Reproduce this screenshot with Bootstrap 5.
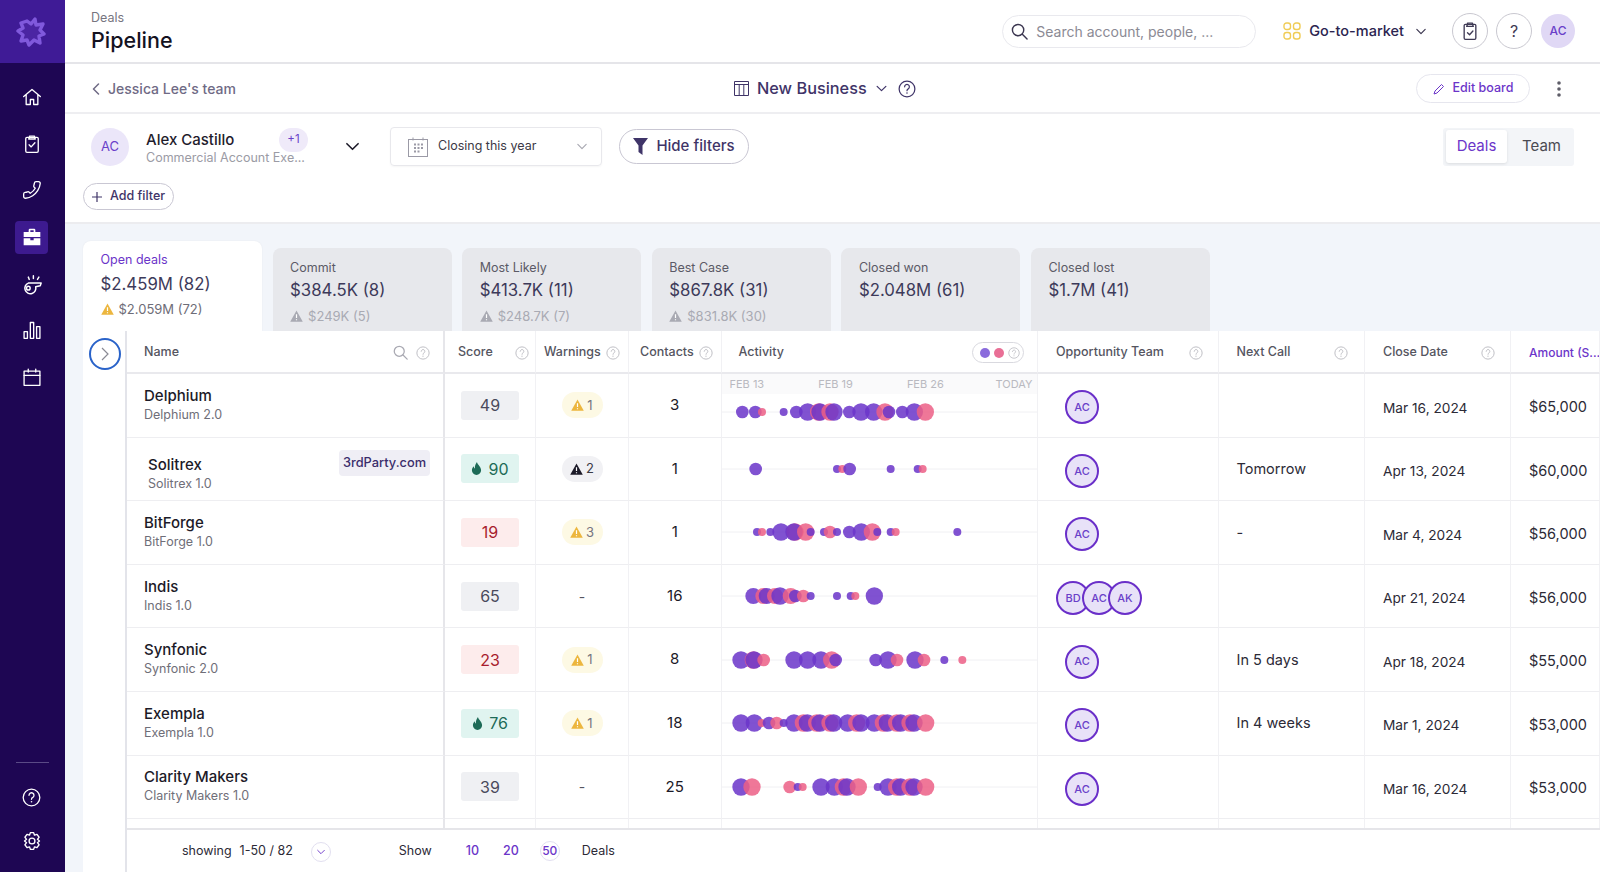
<!DOCTYPE html>
<html lang="en">
<head>
<meta charset="utf-8">
<title>Pipeline</title>
<link href="https://cdn.jsdelivr.net/npm/bootstrap@5.3.0/dist/css/bootstrap.min.css" rel="stylesheet">
<style>
html,body{height:872px;overflow:hidden}
body{font-family:Inter,"Noto Sans",sans-serif;background:#fff;color:#1c1a28;font-size:14px;display:flex}
svg{display:block;flex:none}
.ic{fill:none;stroke:currentColor;stroke-width:1.6;stroke-linecap:round;stroke-linejoin:round}
.side{width:65px;flex:none;background:#1e0653;color:#fff;height:872px}
.logo-box{height:63px;background:#3f1b96;margin-bottom:11px;padding-right:3px}
.side-item{width:33px;height:33px;margin:6.8px auto;border-radius:4px;position:relative;left:-1px}
.side-item.on{background:#3d1a8f}
.side-item.low{margin:5px auto}
.side-item.last{margin-bottom:15px}
.side-rule{width:33px;height:1px;background:#5a4a86;margin:0 auto 13px}
.main-col{flex:1;min-width:0;background:#f2f5fa;height:872px}
.top-head{height:64px;background:#fff;border-bottom:2px solid #e5e5e9;padding:0 25px 0 26px}
.crumb{font-size:12.5px;color:#77757f;line-height:16px;margin-top:10px}
.page-h{font-size:21.500px;font-weight:500;line-height:28px;color:#14121f}
.search-box{width:254px;height:33px;border:1px solid #e9e9ee;border-radius:17px;padding-left:8px;color:#8b8a94;font-size:14px;margin-right:27px;margin-left:1px}
.gtm{font-size:14.5px;font-weight:500;color:#2b2450}
.gtm-chev{margin:0 26px 0 12px}
.round-btn{width:36px;height:36px;border:1px solid #c9c8d0;border-radius:50%;color:#3f3a55;font-size:16px;margin-right:8px;background:#fff}
.me{width:34px;height:34px;border-radius:50%;background:#e0d8f5;color:#6a3fc9;font-size:12px;font-weight:500;margin-left:1px}
.sub-head{height:50px;background:#fff;border-bottom:2px solid #eeeef1;padding:1px 39px 0 27px}
.back-link{font-size:14px;font-weight:500;color:#6f6a85;width:642px}
.board{font-size:16.300px;font-weight:500;color:#3f3468}
.edit-btn{height:29px;width:114px;border:1px solid #e6e6ee;border-radius:15px;color:#6b35c9;font-size:12.5px;font-weight:500;margin-right:27px;background:#fff}
.filter-area{height:110px;background:#fff;border-bottom:2px solid #ececef;padding:13px 26px 0 18px}
.filter-row{height:39px}
.av-lg{width:38px;height:38px;border-radius:50%;background:#ebe6f9;color:#6a3fc9;font-size:13px;margin-left:8px}
.who{width:162px;margin-left:17px;padding-top:1px;align-self:flex-start}
.who b{font-weight:500;font-size:15px;line-height:20px;color:#1f1c2c}
.who small{font-size:12.5px;color:#9b9ba5;line-height:16px;white-space:nowrap;margin-top:-2px}
.plus-chip{width:29px;height:24px;border-radius:12px;background:#efeaf9;color:#6a3fc9;font-size:11.5px}
.who-chev{margin-left:37px}
.date-sel{width:212px;height:39px;border:1px solid #e8e8ec;border-radius:4px;margin-left:30px;padding:0 14px 0 17px;font-size:12.5px;color:#3c3a46;box-shadow:0 1px 2px #0000000a}
.hide-btn{width:130px;height:35px;border:1px solid #c9c7d3;border-radius:18px;margin-left:17px;color:#3f3468;font-size:15px;font-weight:500;background:#fff}
.seg{width:131px;height:38px;background:#f3f5f8;border-radius:3px;padding:3px;font-size:15px}
.seg-on{width:61px;height:33px;background:#fff;border-radius:3px;color:#6b35c9;box-shadow:0 1px 3px #0000001a}
.seg-off{flex:1;color:#4a4a52;padding-left:5px}
.add-btn{width:91px;height:27px;border:1px solid #c9c7d3;border-radius:14px;color:#3f3468;font-size:12.5px;font-weight:500;margin-top:17px;background:#fff}
.tabs-row{height:107px;padding:17px 0 0 18px;gap:10.6px;align-items:flex-end}
.tab-on,.tab-off{width:179px;border-radius:8px 8px 0 0}
.tab-on{height:90px;background:#fff;padding:10px 17.5px;box-shadow:0 0 2px #0000000f}
.tab-off{height:83px;background:#e7e8ec;padding:11px 17.5px}
.tab-k{font-size:12.5px;line-height:18px;color:#5b5a66}
.tab-on .tab-k{color:#6b35c9}
.tab-v{font-size:16.800px;line-height:26px;color:#3d3a5a}
.tab-on .tab-v{margin-top:2px}
.tab-w{font-size:13px;line-height:18px;color:#a9aab3;margin-top:4px;gap:5px}
.tab-on .tab-w{color:#6e6d78;margin-top:3px}
.board-wrap{height:541px;margin-left:18px;background:#fff}
.rail{width:44px;flex:none;border-right:2px solid #e3e4ea;padding:7px 0 0 6px}
.rail-btn{width:32px;height:32px;border:2px solid #2a63c9;border-radius:50%;color:#8a8a94;background:#fff}
.grid-col{flex:1;min-width:0;overflow:hidden}
.grid-scroll{height:497px;overflow:hidden}
.deals{table-layout:fixed;width:1473px;margin:0;border-collapse:separate;border-spacing:0}
.deals th,.deals td{padding:0;border:0;border-right:1px solid #f1f1f4;border-bottom:1px solid #eeeef1;vertical-align:middle;background:#fff;box-shadow:none}
.deals th{height:43px;font-size:12.5px;font-weight:500;color:#55555f;border-bottom:2px solid #e9e9ed}
.deals tbody tr{height:63.6px}
.deals .c-name{border-right:2px solid #e6e6ea}
.th-in{display:flex;align-items:center;justify-content:space-between;white-space:nowrap;overflow:hidden;margin-top:2px}
.th-am{font-size:12px;color:#6b35c9;padding-left:18px}
.q{color:#bdbdc4;width:14px;height:14px}
.n1{font-size:15px;font-weight:500;line-height:20px;color:#1c1a28;margin-top:-1px}
.n2{font-size:12.5px;line-height:18px;color:#6f6e78}
.name-in{padding:0 13px 0 17px;display:flex;justify-content:space-between;align-items:center}
.name-shift{margin-top:11px;margin-left:4px}
.tp{width:91px;height:26px;margin-bottom:12px;border-radius:4px;background:#efeef5;color:#3a2d6b;font-size:12.800px;font-weight:500}
.score{width:58px;height:29px;margin:0 auto;border-radius:3px;font-size:16px;gap:6px}
.s-g{background:#eff0f3;color:#4a4a5c}
.s-h{background:#e0f4f0;color:#1d6b57}
.s-r{background:#fdecec;color:#a81c2e}
.warn{width:41px;height:26px;margin:0 auto;border-radius:13px;background:#fdf9e4;color:#77757f;font-size:13px;gap:3px}
.warn.dk{background:#f1f1f4;color:#3a3a44}
.dash{color:#55555f;text-align:center;font-size:14px}
.ctc{font-size:15px;text-align:center;color:#1c1a28}
.act{position:relative}
.deals td.act-top{padding-top:14px}
.strip{position:absolute;left:0;right:0;top:0;height:20px;background:#fafafb;display:flex;font-size:11px;color:#b9b9c0;padding-left:8px;align-items:center}
.strip span{width:88.7px;flex:none}
.team-in{display:flex;padding:4px 0 0 27px}
.team-in.multi{padding-left:18px}
.pv{width:34px;height:34px;border:2px solid #6a2fc9;border-radius:50%;background:#e8e2f8;color:#6a3fc9;font-size:11px;font-weight:500}
.pv+.pv{margin-left:-8px}
.deals td.nx{padding-left:18px;font-size:14.5px;color:#2c2a36}
.deals td.dt{padding:5px 0 0 18px;font-size:13.7px;color:#2c2a36;white-space:nowrap}
.deals td.am{padding:3px 0 0 18px;font-size:14.5px;color:#2c2a36;white-space:nowrap}
.p{fill:#6b35c9;fill-opacity:.86}
.k{fill:#ec5f86;fill-opacity:.85}
.ln{stroke:#f0f0f3;stroke-width:3}
.lg{width:52px;height:21px;border:1px solid #d9d9df;border-radius:11px;gap:4px;padding-left:7px}
.dotp,.dotk{width:10px;height:10px;border-radius:50%}
.dotp{background:#8a6bdc}.dotk{background:#e96f96}
.pager{height:44px;border-top:2px solid #e5e5e9;font-size:12.5px;color:#2c2a36;padding-left:55px;background:#fff}
.pg-c{width:20px;height:20px;border:1px solid #e2dff0;border-radius:50%;color:#6b35c9;margin:2px 0 0 18px}
.pg-n{color:#6b35c9;font-weight:500}
.pg-on{width:20px;height:20px;border:1px solid #e2dff0;border-radius:50%;font-size:12px}
</style>
</head>
<body>
<svg width="0" height="0" style="position:absolute">
<symbol id="help" viewBox="0 0 16 16"><circle cx="8" cy="8" r="7" fill="none" stroke="currentColor" stroke-width="1.1"/><path d="M5.9 6.1a2.1 2.1 0 1 1 3.2 1.8c-.7.4-1.1.8-1.1 1.6" fill="none" stroke="currentColor" stroke-width="1.1" stroke-linecap="round"/><circle cx="8" cy="11.6" r=".7" fill="currentColor"/></symbol>
<symbol id="tri" viewBox="0 0 14 13"><path d="M7 .5 13.8 12.6H.2Z" fill="currentColor"/><path d="M7 4.6v4M7 10v1" stroke="#fff" stroke-width="1.3"/></symbol>
<symbol id="fire" viewBox="0 0 12 14"><path d="M6.5 0C7 3 11 5 11 9a5 5 0 0 1-10 0c0-2 1-3.4 2-4.4 0 1.4.5 2.2 1.2 2.4C4 4.500 5 2 6.500 0Z" fill="currentColor"/></symbol>
<symbol id="chev" viewBox="0 0 12 8"><path d="M1 1.500 6 6.500 11 1.500" fill="none" stroke="currentColor" stroke-width="1.4" stroke-linecap="round" stroke-linejoin="round"/></symbol>
<symbol id="mag" viewBox="0 0 18 18"><circle cx="7.500" cy="7.500" r="6" fill="none" stroke="currentColor" stroke-width="1.500"/><path d="m12 12 5 5" stroke="currentColor" stroke-width="1.500" stroke-linecap="round"/></symbol>
</svg>

<nav class="side d-flex flex-column">
  <div class="logo-box d-flex align-items-center justify-content-center">
    <svg width="30" height="30" viewBox="0 0 30 30"><path d="M11 4 15 7 19 2 20 8 27 7 24 13 28 17 23 19 24 26 18 23 13 28 11 23 5 24 7 18 2 14 7 11 5 6Z" fill="#4b25a3" stroke="#8059dc" stroke-width="3.400" stroke-linejoin="round"/></svg>
  </div>
  <div class="side-item d-flex align-items-center justify-content-center"><svg class="ic" width="20" height="20" viewBox="0 0 24 24"><path d="M2 11.500 12 3l10 8.500M5 9v12h5v-6h4v6h5V9"/></svg></div>
  <div class="side-item d-flex align-items-center justify-content-center"><svg class="ic" width="20" height="20" viewBox="0 0 24 24"><rect x="4.500" y="4" width="15" height="18" rx="1.500"/><path d="M9 4V2.500h6V4l1 2H8ZM8.500 13l2.500 2.500 4.500-5"/></svg></div>
  <div class="side-item d-flex align-items-center justify-content-center"><svg class="ic" width="20" height="20" viewBox="0 0 24 24"><path transform="matrix(-1 0 0 1 24 0)" d="M22 16.920v3a2 2 0 0 1-2.180 2 19.790 19.790 0 0 1-8.630-3.070 19.500 19.500 0 0 1-6-6 19.790 19.790 0 0 1-3.070-8.670A2 2 0 0 1 4.110 2h3a2 2 0 0 1 2 1.720 12.840 12.840 0 0 0 .7 2.810 2 2 0 0 1-.45 2.110L8.090 9.910a16 16 0 0 0 6 6l1.270-1.270a2 2 0 0 1 2.110-.45 12.840 12.840 0 0 0 2.810.7A2 2 0 0 1 22 16.920z"/></svg></div>
  <div class="side-item on d-flex align-items-center justify-content-center"><svg width="20" height="20" viewBox="0 0 24 24" fill="#fff"><path d="M8 6V3.500A1.500 1.500 0 0 1 9.500 2h5A1.500 1.500 0 0 1 16 3.500V6h6v6H2V6Zm2-2v2h4V4ZM2 13.500h8V16h4v-2.500h8V22H2Z"/></svg></div>
  <div class="side-item d-flex align-items-center justify-content-center"><svg class="ic" width="22" height="22" viewBox="0 0 24 24"><path d="M8 11h14l-1 3-5 1a6 6 0 1 1-8-4Z"/><circle cx="8" cy="16.500" r="2"/><path d="M9 7 8 4.500M13.500 6V3M18 7l1.500-2.500"/></svg></div>
  <div class="side-item d-flex align-items-center justify-content-center"><svg class="ic" width="20" height="20" viewBox="0 0 24 24"><rect x="2.500" y="14" width="4" height="8"/><rect x="10" y="3" width="4" height="19"/><rect x="17.500" y="8" width="4" height="14"/></svg></div>
  <div class="side-item d-flex align-items-center justify-content-center"><svg class="ic" width="20" height="20" viewBox="0 0 24 24"><rect x="2.500" y="5" width="19" height="17"/><path d="M2.500 10h19M7.500 2.500V6M16.500 2.500V6"/></svg></div>
  <div class="mt-auto"></div>
  <div class="side-rule"></div>
  <div class="side-item low d-flex align-items-center justify-content-center"><svg width="19" height="19" viewBox="0 0 16 16" color="#fff"><use href="#help"/></svg></div>
  <div class="side-item low last d-flex align-items-center justify-content-center"><svg class="ic" width="20" height="20" viewBox="0 0 24 24"><path d="M10 2h4l1 3 3-1 2.500 3.500L18.500 10l2.500 2-2.500 2 2 2.500L18 20l-3-1-1 3h-4l-1-3-3 1-2.500-3.500L5.500 14 3 12l2.500-2-2-2.500L6 4l3 1Z"/><circle cx="12" cy="12" r="3.500"/></svg></div>
</nav>

<div class="main-col d-flex flex-column">
  <header class="top-head d-flex align-items-start">
    <div class="flex-grow-1">
      <div class="crumb">Deals</div>
      <div class="page-h">Pipeline</div>
    </div>
    <div class="d-flex align-items-center" style="height:62px">
      <div class="search-box d-flex align-items-center gap-2"><svg width="17" height="17" color="#3b3650"><use href="#mag"/></svg><span>Search account, people, ...</span></div>
      <svg width="18" height="18" viewBox="0 0 18 18" fill="none" stroke="#f0cc55" stroke-width="1.400"><rect x="1" y="1" width="6.500" height="6.500" rx="2.500"/><rect x="10.500" y="1" width="6.500" height="6.500" rx="2.500"/><rect x="1" y="10.500" width="6.500" height="6.500" rx="2.500"/><rect x="10.500" y="10.500" width="6.500" height="6.500" rx="2.500"/></svg>
      <span class="gtm ms-2">Go-to-market</span>
      <svg class="gtm-chev" width="10" height="7" color="#3b3650"><use href="#chev"/></svg>
      <div class="round-btn d-flex align-items-center justify-content-center"><svg class="ic" width="20" height="20" viewBox="0 0 24 24" stroke-width="1.300"><rect x="5" y="4" width="14" height="18" rx="1.500"/><path d="M9 4V2.500h6V4l1 2.500H8ZM9 14l2.500 2.500L15.500 12"/></svg></div>
      <div class="round-btn d-flex align-items-center justify-content-center">?</div>
      <div class="me d-flex align-items-center justify-content-center">AC</div>
    </div>
  </header>

  <div class="sub-head d-flex align-items-center">
    <div class="back-link d-flex align-items-center gap-2"><svg width="8" height="12" viewBox="0 0 8 12" fill="none" stroke="#6f6a85" stroke-width="1.500" stroke-linecap="round" stroke-linejoin="round"><path d="M6.500 1 1.500 6l5 5"/></svg><span>Jessica Lee's team</span></div>
    <div class="board d-flex align-items-center flex-grow-1">
      <svg width="15" height="15" viewBox="0 0 15 15" fill="none" stroke="#3f3468"><path d="M.5.500h14v14H.5ZM.5 3.500h14M5.200 3.500v11M9.800 3.500v11"/></svg>
      <span style="margin-left:8px">New Business</span>
      <svg width="11" height="7" style="margin-left:9px" color="#3f3468"><use href="#chev"/></svg>
      <svg width="18" height="18" style="margin-left:11px" color="#3f3468"><use href="#help"/></svg>
    </div>
    <div class="edit-btn d-flex align-items-center justify-content-center gap-2"><svg width="12" height="12" viewBox="0 0 12 12" fill="none" stroke="#6b35c9"><path d="M8.500 1.500 10.500 3.500 4 10l-3 1 1-3Z"/></svg>Edit board</div>
    <svg width="4" height="16" viewBox="0 0 4 16" fill="#5e5d68"><circle cx="2" cy="2" r="1.800"/><circle cx="2" cy="8" r="1.800"/><circle cx="2" cy="14" r="1.800"/></svg>
  </div>

  <div class="filter-area">
    <div class="filter-row d-flex align-items-center">
      <div class="av-lg d-flex align-items-center justify-content-center">AC</div>
      <div class="who d-flex flex-column">
        <div class="d-flex justify-content-between align-items-center"><b>Alex Castillo</b><span class="plus-chip d-flex align-items-center justify-content-center">+1</span></div>
        <small>Commercial Account Exe...</small>
      </div>
      <svg class="who-chev" width="15" height="9" color="#1c1a28"><use href="#chev"/></svg>
      <div class="date-sel d-flex align-items-center">
        <svg width="20" height="20" viewBox="0 0 20 20" fill="none" stroke="#9b9aa6"><rect x=".5" y="2.500" width="19" height="17"/><path d="M5 .5v3M15 .5v3"/><path d="M6 7.500h2M9.500 7.500h2M13 7.500h2M6 11h2M9.500 11h2M13 11h2M6 14.500h2M9.500 14.500h2" stroke-width="2"/></svg>
        <span style="margin-left:10px" class="flex-grow-1">Closing this year</span>
        <svg width="10" height="7" color="#a9a9b2"><use href="#chev"/></svg>
      </div>
      <div class="hide-btn d-flex align-items-center justify-content-center gap-2"><svg width="15" height="17" viewBox="0 0 15 17" fill="#3f3468"><path d="M0 0h15L9.500 7.500V17L5.500 14V7.500Z"/></svg>Hide filters</div>
      <div class="ms-auto seg d-flex align-items-center"><span class="seg-on d-flex align-items-center justify-content-center">Deals</span><span class="seg-off text-center">Team</span></div>
    </div>
    <div class="add-btn d-flex align-items-center justify-content-center gap-2"><svg width="10" height="10" viewBox="0 0 10 10" stroke="#3f3468" stroke-width="1.200"><path d="M5 0v10M0 5h10"/></svg>Add filter</div>
  </div>

  <div class="tabs-row d-flex">
    <div class="tab-on"><div class="tab-k">Open deals</div><div class="tab-v">$2.459M (82)</div><div class="tab-w d-flex align-items-center"><svg width="13" height="12" color="#ecb63e"><use href="#tri"/></svg>$2.059M (72)</div></div>
    <div class="tab-off"><div class="tab-k">Commit</div><div class="tab-v">$384.5K (8)</div><div class="tab-w d-flex align-items-center"><svg width="13" height="12" color="#a9aab3"><use href="#tri"/></svg>$249K (5)</div></div>
    <div class="tab-off"><div class="tab-k">Most Likely</div><div class="tab-v">$413.7K (11)</div><div class="tab-w d-flex align-items-center"><svg width="13" height="12" color="#a9aab3"><use href="#tri"/></svg>$248.7K (7)</div></div>
    <div class="tab-off"><div class="tab-k">Best Case</div><div class="tab-v">$867.8K (31)</div><div class="tab-w d-flex align-items-center"><svg width="13" height="12" color="#a9aab3"><use href="#tri"/></svg>$831.8K (30)</div></div>
    <div class="tab-off"><div class="tab-k">Closed won</div><div class="tab-v">$2.048M (61)</div></div>
    <div class="tab-off"><div class="tab-k">Closed lost</div><div class="tab-v">$1.7M (41)</div></div>
  </div>

  <div class="board-wrap d-flex">
    <div class="rail"><div class="rail-btn d-flex align-items-center justify-content-center"><svg width="8" height="14" viewBox="0 0 8 14" fill="none" stroke="currentColor" stroke-width="1.200"><path d="M1 1l6 6-6 6"/></svg></div></div>
    <div class="grid-col d-flex flex-column">
      <div class="grid-scroll">
      <table class="table deals">
        <colgroup><col style="width:318px"><col style="width:91px"><col style="width:93px"><col style="width:92.500px"><col style="width:316.500px"><col style="width:180.500px"><col style="width:146.500px"><col style="width:146px"><col style="width:89px"></colgroup>
        <thead><tr>
          <th class="c-name"><div class="th-in" style="padding:0 13px 0 17px"><span class="flex-grow-1">Name</span><svg class="me-2" width="15" height="15" color="#a9a9b2"><use href="#mag"/></svg><svg class="q"><use href="#help"/></svg></div></th>
          <th><div class="th-in" style="padding:0 6px 0 13px">Score<svg class="q"><use href="#help"/></svg></div></th>
          <th><div class="th-in" style="padding:0 8px 0 8px">Warnings<svg class="q"><use href="#help"/></svg></div></th>
          <th><div class="th-in" style="padding:0 8px 0 11px">Contacts<svg class="q"><use href="#help"/></svg></div></th>
          <th><div class="th-in" style="padding:0 13px 0 17px">Activity<span class="lg d-flex align-items-center"><i class="dotp"></i><i class="dotk"></i><svg class="q" style="width:12px;height:12px"><use href="#help"/></svg></span></div></th>
          <th><div class="th-in" style="padding:0 15px 0 18px">Opportunity Team<svg class="q"><use href="#help"/></svg></div></th>
          <th><div class="th-in" style="padding:0 16px 0 18px">Next Call<svg class="q"><use href="#help"/></svg></div></th>
          <th><div class="th-in" style="padding:0 15px 0 18px">Close Date<svg class="q"><use href="#help"/></svg></div></th>
          <th><div class="th-in th-am">Amount (S...</div></th>
        </tr></thead>
        <tbody>
        <tr>
          <td class="c-name"><div class="name-in"><div><div class="n1">Delphium</div><div class="n2">Delphium 2.0</div></div></div></td>
          <td><div class="score s-g d-flex align-items-center justify-content-center">49</div></td>
          <td><div class="warn d-flex align-items-center justify-content-center"><svg width="13" height="12" color="#ecb63e"><use href="#tri"/></svg>1</div></td>
          <td class="ctc">3</td>
          <td class="act act-top"><div class="strip"><span>FEB 13</span><span>FEB 19</span><span>FEB 26</span><span>TODAY</span></div>
            <svg width="317" height="44" viewBox="6 -66 951 132"><path class="ln" d="M6 0H951"/><circle class="p" cx="67" r="19"/><circle class="p" cx="106" r="19"/><circle class="k" cx="126" r="12"/><circle class="p" cx="191" r="12"/><circle class="p" cx="229" r="19"/><circle class="p" cx="263" r="26"/><circle class="k" cx="296" r="26"/><circle class="p" cx="300" r="26"/><circle class="k" cx="330" r="26"/><circle class="p" cx="342" r="26"/><circle class="p" cx="388" r="19"/><circle class="p" cx="423" r="26"/><circle class="p" cx="461" r="26"/><circle class="k" cx="495" r="26"/><circle class="p" cx="507" r="19"/><circle class="p" cx="547" r="19"/><circle class="p" cx="583" r="26"/><circle class="k" cx="616" r="26"/></svg></td>
          <td><div class="team-in"><div class="pv d-flex align-items-center justify-content-center">AC</div></div></td>
          <td class="nx"></td>
          <td class="dt">Mar 16, 2024</td>
          <td class="am">$65,000</td>
        </tr>
        <tr>
          <td class="c-name"><div class="name-in"><div class="name-shift"><div class="n1">Solitrex</div><div class="n2">Solitrex 1.0</div></div><div class="tp d-flex align-items-center justify-content-center">3rdParty.com</div></div></td>
          <td><div class="score s-h d-flex align-items-center justify-content-center"><svg width="11" height="13" color="#1d6b57"><use href="#fire"/></svg>90</div></td>
          <td><div class="warn dk d-flex align-items-center justify-content-center"><svg width="13" height="12" color="#1c1a28"><use href="#tri"/></svg>2</div></td>
          <td class="ctc">1</td>
          <td class="act"><svg width="317" height="44" viewBox="6 -66 951 132"><path class="ln" d="M6 0H951"/><circle class="p" cx="107" r="19"/><circle class="p" cx="351" r="12"/><circle class="k" cx="367" r="12"/><circle class="p" cx="389" r="19"/><circle class="p" cx="512" r="12"/><circle class="p" cx="593" r="12"/><circle class="k" cx="608" r="12"/></svg></td>
          <td><div class="team-in"><div class="pv d-flex align-items-center justify-content-center">AC</div></div></td>
          <td class="nx">Tomorrow</td>
          <td class="dt">Apr 13, 2024</td>
          <td class="am">$60,000</td>
        </tr>
        <tr>
          <td class="c-name"><div class="name-in"><div><div class="n1">BitForge</div><div class="n2">BitForge 1.0</div></div></div></td>
          <td><div class="score s-r d-flex align-items-center justify-content-center">19</div></td>
          <td><div class="warn d-flex align-items-center justify-content-center"><svg width="13" height="12" color="#ecb63e"><use href="#tri"/></svg>3</div></td>
          <td class="ctc">1</td>
          <td class="act"><svg width="317" height="44" viewBox="6 -66 951 132"><path class="ln" d="M6 0H951"/><circle class="p" cx="111" r="12"/><circle class="k" cx="126" r="12"/><circle class="p" cx="151" r="12"/><circle class="p" cx="183" r="26"/><circle class="k" cx="225" r="26"/><circle class="p" cx="222" r="26"/><circle class="k" cx="257" r="26"/><circle class="p" cx="272" r="12"/><circle class="p" cx="312" r="12"/><circle class="k" cx="330" r="19"/><circle class="p" cx="351" r="12"/><circle class="p" cx="388" r="19"/><circle class="p" cx="424" r="26"/><circle class="k" cx="457" r="26"/><circle class="p" cx="472" r="12"/><circle class="p" cx="512" r="12"/><circle class="k" cx="527" r="12"/><circle class="p" cx="712" r="12"/></svg></td>
          <td><div class="team-in"><div class="pv d-flex align-items-center justify-content-center">AC</div></div></td>
          <td class="nx">-</td>
          <td class="dt">Mar 4, 2024</td>
          <td class="am">$56,000</td>
        </tr>
        <tr>
          <td class="c-name"><div class="name-in"><div><div class="n1">Indis</div><div class="n2">Indis 1.0</div></div></div></td>
          <td><div class="score s-g d-flex align-items-center justify-content-center">65</div></td>
          <td class="dash">-</td>
          <td class="ctc">16</td>
          <td class="act"><svg width="317" height="44" viewBox="6 -66 951 132"><path class="ln" d="M6 0H951"/><circle class="p" cx="100" r="24"/><circle class="k" cx="130" r="24"/><circle class="p" cx="140" r="24"/><circle class="k" cx="165" r="24"/><circle class="p" cx="180" r="26"/><circle class="k" cx="212" r="24"/><circle class="p" cx="226" r="19"/><circle class="k" cx="250" r="19"/><circle class="p" cx="272" r="12"/><circle class="p" cx="351" r="12"/><circle class="p" cx="392" r="12"/><circle class="k" cx="406" r="12"/><circle class="p" cx="463" r="26"/></svg></td>
          <td><div class="team-in multi"><div class="pv d-flex align-items-center justify-content-center">BD</div><div class="pv d-flex align-items-center justify-content-center">AC</div><div class="pv d-flex align-items-center justify-content-center">AK</div></div></td>
          <td class="nx"></td>
          <td class="dt">Apr 21, 2024</td>
          <td class="am">$56,000</td>
        </tr>
        <tr>
          <td class="c-name"><div class="name-in"><div><div class="n1">Synfonic</div><div class="n2">Synfonic 2.0</div></div></div></td>
          <td><div class="score s-r d-flex align-items-center justify-content-center">23</div></td>
          <td><div class="warn d-flex align-items-center justify-content-center"><svg width="13" height="12" color="#ecb63e"><use href="#tri"/></svg>1</div></td>
          <td class="ctc">8</td>
          <td class="act"><svg width="317" height="44" viewBox="6 -66 951 132"><path class="ln" d="M6 0H951"/><circle class="p" cx="63" r="26"/><circle class="k" cx="100" r="26"/><circle class="p" cx="102" r="26"/><circle class="k" cx="131" r="19"/><circle class="p" cx="222" r="26"/><circle class="p" cx="263" r="26"/><circle class="p" cx="303" r="26"/><circle class="k" cx="335" r="26"/><circle class="p" cx="347" r="19"/><circle class="p" cx="467" r="19"/><circle class="p" cx="504" r="26"/><circle class="k" cx="531" r="19"/><circle class="p" cx="585" r="26"/><circle class="k" cx="612" r="19"/><circle class="p" cx="673" r="12"/><circle class="k" cx="727" r="12"/></svg></td>
          <td><div class="team-in"><div class="pv d-flex align-items-center justify-content-center">AC</div></div></td>
          <td class="nx">In 5 days</td>
          <td class="dt">Apr 18, 2024</td>
          <td class="am">$55,000</td>
        </tr>
        <tr>
          <td class="c-name"><div class="name-in"><div><div class="n1">Exempla</div><div class="n2">Exempla 1.0</div></div></div></td>
          <td><div class="score s-h d-flex align-items-center justify-content-center"><svg width="11" height="13" color="#1d6b57"><use href="#fire"/></svg>76</div></td>
          <td><div class="warn d-flex align-items-center justify-content-center"><svg width="13" height="12" color="#ecb63e"><use href="#tri"/></svg>1</div></td>
          <td class="ctc">18</td>
          <td class="act"><svg width="317" height="44" viewBox="6 -66 951 132"><path class="ln" d="M6 0H951"/><circle class="p" cx="63" r="26"/><circle class="p" cx="103" r="26"/><circle class="k" cx="125" r="12"/><circle class="p" cx="147" r="19"/><circle class="k" cx="170" r="19"/><circle class="p" cx="191" r="12"/><circle class="p" cx="222" r="26"/><circle class="k" cx="250" r="26"/><circle class="p" cx="262" r="26"/><circle class="k" cx="290" r="26"/><circle class="p" cx="300" r="26"/><circle class="k" cx="330" r="26"/><circle class="p" cx="341" r="26"/><circle class="p" cx="383" r="26"/><circle class="k" cx="410" r="26"/><circle class="p" cx="423" r="26"/><circle class="p" cx="463" r="26"/><circle class="k" cx="490" r="26"/><circle class="p" cx="502" r="26"/><circle class="k" cx="530" r="26"/><circle class="p" cx="542" r="26"/><circle class="k" cx="570" r="26"/><circle class="p" cx="582" r="26"/><circle class="k" cx="617" r="26"/></svg></td>
          <td><div class="team-in"><div class="pv d-flex align-items-center justify-content-center">AC</div></div></td>
          <td class="nx">In 4 weeks</td>
          <td class="dt">Mar 1, 2024</td>
          <td class="am">$53,000</td>
        </tr>
        <tr>
          <td class="c-name"><div class="name-in"><div><div class="n1">Clarity Makers</div><div class="n2">Clarity Makers 1.0</div></div></div></td>
          <td><div class="score s-g d-flex align-items-center justify-content-center">39</div></td>
          <td class="dash">-</td>
          <td class="ctc">25</td>
          <td class="act"><svg width="317" height="44" viewBox="6 -66 951 132"><path class="ln" d="M6 0H951"/><circle class="p" cx="63" r="26"/><circle class="k" cx="96" r="26"/><circle class="k" cx="209" r="19"/><circle class="p" cx="233" r="12"/><circle class="k" cx="248" r="12"/><circle class="p" cx="303" r="26"/><circle class="p" cx="343" r="26"/><circle class="k" cx="370" r="26"/><circle class="p" cx="381" r="26"/><circle class="k" cx="415" r="26"/><circle class="p" cx="473" r="12"/><circle class="p" cx="504" r="26"/><circle class="k" cx="530" r="26"/><circle class="p" cx="542" r="26"/><circle class="k" cx="570" r="26"/><circle class="p" cx="582" r="26"/><circle class="k" cx="617" r="26"/></svg></td>
          <td><div class="team-in"><div class="pv d-flex align-items-center justify-content-center">AC</div></div></td>
          <td class="nx"></td>
          <td class="dt">Mar 16, 2024</td>
          <td class="am">$53,000</td>
        </tr>
        <tr>
          <td class="c-name"></td><td></td><td></td><td></td><td></td><td></td><td></td><td></td><td></td>
        </tr>
        </tbody>
      </table>
      </div>
      <div class="pager d-flex align-items-center">
        <span>showing</span><span class="ms-2">1-50 / 82</span>
        <span class="pg-c d-flex align-items-center justify-content-center"><svg width="8" height="6"><use href="#chev"/></svg></span>
        <span style="margin-left:68px">Show</span>
        <span class="pg-n" style="margin-left:34px">10</span>
        <span class="pg-n" style="margin-left:24px">20</span>
        <span class="pg-n pg-on d-flex align-items-center justify-content-center" style="margin-left:21px">50</span>
        <span style="margin-left:22px">Deals</span>
      </div>
    </div>
  </div>
</div>
</body>
</html>
